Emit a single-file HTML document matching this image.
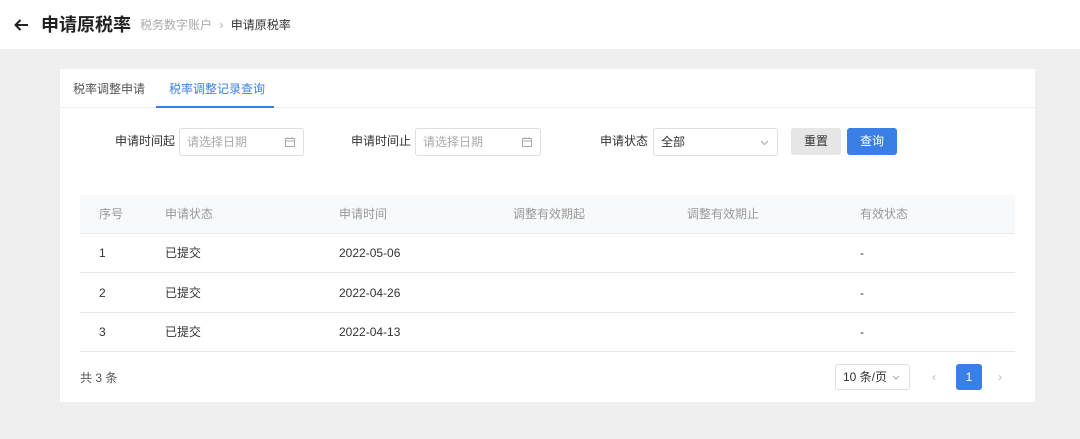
<!DOCTYPE html>
<html><head><meta charset="utf-8"><style>
*{margin:0;padding:0;box-sizing:border-box}
body{width:1080px;height:439px;background:#efefef;font-family:"Liberation Sans","Noto Sans CJK SC",sans-serif;position:relative;overflow:hidden;color:#333}
.a{position:absolute;white-space:nowrap;line-height:16px}
.hdr{position:absolute;left:0;top:0;width:1080px;height:49px;background:#fff}
.card{position:absolute;left:60px;top:69px;width:975px;height:333px;background:#fff}
.inp{position:absolute;height:28px;border:1px solid #dcdfe6;border-radius:3px;background:#fff;font-size:12px}
.th{font-size:12px;color:#999;top:206px}
.td{font-size:12px;color:#333}
.line{position:absolute;left:80px;width:935px;height:1px;background:#e8e8e8}
</style></head><body>
<div class="hdr"></div>
<svg class="a" style="left:13px;top:18px" width="16" height="14" viewBox="0 0 16 14"><path d="M15 7H2.5M7.5 2L2.5 7l5 5" stroke="#222" stroke-width="2" fill="none"/></svg>
<div class="a" style="left:41px;top:15px;font-size:18px;font-weight:bold;color:#222;line-height:20px">申请原税率</div>
<div class="a" style="left:140px;top:17px;font-size:12px;color:#aaa">税务数字账户 <span style="margin:0 4px">›</span> <span style="color:#333">申请原税率</span></div>
<div class="card"></div>
<div class="a" style="left:60px;top:107px;width:975px;height:1px;background:#eee"></div>
<div class="a" style="left:73px;top:81px;font-size:12px;color:#555">税率调整申请</div>
<div class="a" style="left:169px;top:81px;font-size:12px;color:#3a7fe6">税率调整记录查询</div>
<div class="a" style="left:156px;top:106px;width:118px;height:2px;background:#3a7fe6"></div>

<div class="a" style="left:115px;top:133px;font-size:12px">申请时间起</div>
<div class="inp" style="left:179px;top:128px;width:125px"><span class="a" style="left:7px;top:5px;color:#aaa">请选择日期</span><svg class="a" style="left:105px;top:8px" width="10" height="10"><rect x="0.5" y="1.5" width="9" height="8" fill="none" stroke="#aaa"/><path d="M0.5 4h9M3 0v2M7 0v2" stroke="#aaa"/></svg></div>
<div class="a" style="left:351px;top:133px;font-size:12px">申请时间止</div>
<div class="inp" style="left:415px;top:128px;width:126px"><span class="a" style="left:7px;top:5px;color:#aaa">请选择日期</span><svg class="a" style="left:106px;top:8px" width="10" height="10"><rect x="0.5" y="1.5" width="9" height="8" fill="none" stroke="#aaa"/><path d="M0.5 4h9M3 0v2M7 0v2" stroke="#aaa"/></svg></div>
<div class="a" style="left:600px;top:133px;font-size:12px">申请状态</div>
<div class="inp" style="left:653px;top:128px;width:125px"><span class="a" style="left:7px;top:5px;color:#333">全部</span><svg class="a" style="left:106px;top:11px" width="9" height="6"><path d="M1 1l3.5 3.5L8 1" stroke="#aaa" fill="none"/></svg></div>
<div class="a" style="left:791px;top:128px;width:50px;height:27px;background:#e6e6e6;border-radius:3px;font-size:12px;text-align:center;line-height:27px">重置</div>
<div class="a" style="left:847px;top:128px;width:50px;height:27px;background:#3a7fe6;border-radius:3px;font-size:12px;color:#fff;text-align:center;line-height:27px">查询</div>

<div class="a" style="left:80px;top:195px;width:935px;height:38px;background:#f8f9fb"></div>
<div class="line" style="top:233px"></div>
<div class="line" style="top:272px"></div>
<div class="line" style="top:312px"></div>
<div class="line" style="top:351px"></div>
<div class="a th" style="left:99px">序号</div>
<div class="a th" style="left:165px">申请状态</div>
<div class="a th" style="left:339px">申请时间</div>
<div class="a th" style="left:513px">调整有效期起</div>
<div class="a th" style="left:687px">调整有效期止</div>
<div class="a th" style="left:860px">有效状态</div>

<div class="a td" style="left:99px;top:245px">1</div><div class="a td" style="left:165px;top:245px">已提交</div><div class="a td" style="left:339px;top:245px">2022-05-06</div><div class="a td" style="left:860px;top:245px">-</div>
<div class="a td" style="left:99px;top:285px">2</div><div class="a td" style="left:165px;top:285px">已提交</div><div class="a td" style="left:339px;top:285px">2022-04-26</div><div class="a td" style="left:860px;top:285px">-</div>
<div class="a td" style="left:99px;top:324px">3</div><div class="a td" style="left:165px;top:324px">已提交</div><div class="a td" style="left:339px;top:324px">2022-04-13</div><div class="a td" style="left:860px;top:324px">-</div>

<div class="a" style="left:80px;top:370px;font-size:12px;color:#555">共 3 条</div>
<div class="inp" style="left:835px;top:364px;width:75px;height:26px"><span class="a" style="left:7px;top:4px;color:#333">10 条/页</span><svg class="a" style="left:56px;top:10px" width="8" height="5"><path d="M1 1l3 3 3-3" stroke="#aaa" fill="none"/></svg></div>
<div class="a" style="left:932px;top:369px;font-size:12px;color:#bbb">‹</div>
<div class="a" style="left:956px;top:364px;width:26px;height:26px;background:#3a7fe6;border-radius:3px;color:#fff;font-size:12px;text-align:center;line-height:26px">1</div>
<div class="a" style="left:998px;top:369px;font-size:12px;color:#bbb">›</div>
</body></html>
